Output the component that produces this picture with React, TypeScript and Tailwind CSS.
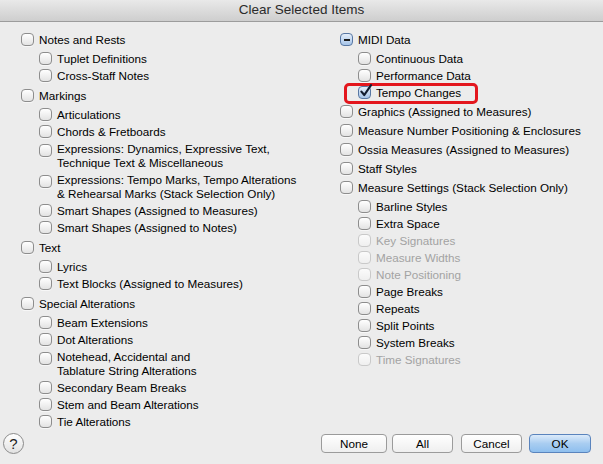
import React from "react";

type Row = {
  label: string;
  lines?: string[];
  disabled?: boolean;
  checked?: boolean;
  mixed?: boolean;
  marked?: boolean;
};

type Group = { top: Row; items?: Row[] };

const leftGroups: Group[] = [
  {
    top: { label: "Notes and Rests" },
    items: [{ label: "Tuplet Definitions" }, { label: "Cross-Staff Notes" }],
  },
  {
    top: { label: "Markings" },
    items: [
      { label: "Articulations" },
      { label: "Chords & Fretboards" },
      {
        label: "",
        lines: ["Expressions: Dynamics, Expressive Text,", "Technique Text & Miscellaneous"],
      },
      {
        label: "",
        lines: [
          "Expressions: Tempo Marks, Tempo Alterations",
          "& Rehearsal Marks (Stack Selection Only)",
        ],
      },
      { label: "Smart Shapes (Assigned to Measures)" },
      { label: "Smart Shapes (Assigned to Notes)" },
    ],
  },
  {
    top: { label: "Text" },
    items: [{ label: "Lyrics" }, { label: "Text Blocks (Assigned to Measures)" }],
  },
  {
    top: { label: "Special Alterations" },
    items: [
      { label: "Beam Extensions" },
      { label: "Dot Alterations" },
      { label: "", lines: ["Notehead, Accidental and", "Tablature String Alterations"] },
      { label: "Secondary Beam Breaks" },
      { label: "Stem and Beam Alterations" },
      { label: "Tie Alterations" },
    ],
  },
];

const rightGroups: Group[] = [
  {
    top: { label: "MIDI Data", mixed: true },
    items: [
      { label: "Continuous Data" },
      { label: "Performance Data" },
      { label: "Tempo Changes", checked: true, marked: true },
    ],
  },
  { top: { label: "Graphics (Assigned to Measures)" } },
  { top: { label: "Measure Number Positioning & Enclosures" } },
  { top: { label: "Ossia Measures (Assigned to Measures)" } },
  { top: { label: "Staff Styles" } },
  {
    top: { label: "Measure Settings (Stack Selection Only)" },
    items: [
      { label: "Barline Styles" },
      { label: "Extra Space" },
      { label: "Key Signatures", disabled: true },
      { label: "Measure Widths", disabled: true },
      { label: "Note Positioning", disabled: true },
      { label: "Page Breaks" },
      { label: "Repeats" },
      { label: "Split Points" },
      { label: "System Breaks" },
      { label: "Time Signatures", disabled: true },
    ],
  },
];

const Box = ({ row }: { row: Row }) => {
  if (row.mixed || row.checked) {
    return (
      <span className="relative mt-[2px] w-[13px] h-[13px] shrink-0 rounded-[4px] border border-[#5877a3] bg-gradient-to-b from-[#e4eefa] to-[#a6c4e8]">
        {row.mixed && (
          <span className="absolute left-[2.5px] top-[4.5px] w-[6px] h-[2px] bg-[#1b1b1b]" />
        )}
        {row.checked && (
          <svg
            className="absolute left-[0px] top-[-3px]"
            width="14"
            height="14"
            viewBox="0 0 14 14"
          >
            <path
              d="M2.4 7.6 L5.3 11 L12 1.2"
              fill="none"
              stroke="#121c30"
              strokeWidth="2.2"
              strokeLinecap="round"
              strokeLinejoin="round"
            />
          </svg>
        )}
      </span>
    );
  }
  return (
    <span
      className={
        row.disabled
          ? "mt-[2px] w-[13px] h-[13px] shrink-0 rounded-[4px] border border-[#c9c9c9] bg-gradient-to-b from-[#fbfbfb] to-[#efefef]"
          : "mt-[2px] w-[13px] h-[13px] shrink-0 rounded-[4px] border border-[#8d8d8d] bg-gradient-to-b from-white to-[#e3e3e3] shadow-[0_1px_0_rgba(255,255,255,0.6)]"
      }
    />
  );
};

const Item = ({ row }: { row: Row }) => {
  const multi = !!row.lines;
  return (
    <div className={multi ? "relative flex gap-[5px] py-[2px]" : "relative flex gap-[5px] h-[17px] items-start"}>
      {row.marked && (
        <span className="absolute left-[-14px] top-[-1.5px] w-[134px] h-[21px] rounded-[5px] border-[3px] border-[#e3161d]" />
      )}
      <Box row={row} />
      <div
        className={
          (row.disabled ? "text-[#a3a3a3] " : "text-black ") +
          (multi ? "leading-[13.5px] -mt-[2px] pt-[2px]" : "leading-[17px]")
        }
      >
        {multi ? row.lines!.map((l) => <div key={l}>{l}</div>) : row.label}
      </div>
    </div>
  );
};

const Column = ({ groups, gap }: { groups: Group[]; gap: string }) => (
  <div className={"flex flex-col " + gap}>
    {groups.map((g) => (
      <div key={g.top.label}>
        <Item row={g.top} />
        {g.items && (
          <div className="mt-[2px] ml-[18px] flex flex-col">
            {g.items.map((r, i) => (
              <Item key={r.label + i} row={r} />
            ))}
          </div>
        )}
      </div>
    ))}
  </div>
);

const Button = ({ label, className, primary }: { label: string; className: string; primary?: boolean }) => (
  <button
    className={
      "h-[19px] rounded-[4px] border text-[11.7px] leading-[17px] text-black " +
      (primary
        ? "border-[#5a84bd] bg-gradient-to-b from-[#dcebfa] via-[#a9cdf1] to-[#8ebfee] "
        : "border-[#9b9b9b] bg-gradient-to-b from-white to-[#efefef] ") +
      className
    }
  >
    {label}
  </button>
);

export default function App() {
  return (
    <div
      className="w-[603px] h-[464px] bg-[#ececec] flex flex-col overflow-hidden text-[11.7px]"
      style={{ fontFamily: '"Liberation Sans", Arial, sans-serif' }}
    >
      <div className="h-[22px] shrink-0 flex items-center justify-center bg-gradient-to-b from-[#e9e9e9] to-[#cecece] border-b border-[#9c9c9c] text-[13.5px] text-[#2b2b2b]">
        Clear Selected Items
      </div>

      <div className="flex pt-[9px]">
        <div className="w-[319px] pl-[21px]">
          <Column groups={leftGroups} gap="gap-[3px]" />
        </div>
        <div className="pl-[21px]">
          <Column groups={rightGroups} gap="gap-[2px]" />
        </div>
      </div>

      <div className="mt-auto mb-[10px] h-[22px] flex items-center pl-[3px] pr-[12px]">
        <div className="w-[21px] h-[21px] rounded-full border border-[#8a8a8a] bg-gradient-to-b from-white to-[#e2e2e2] flex items-center justify-center text-[15px] text-[#222] leading-none">
          ?
        </div>
        <div className="ml-auto flex items-center">
          <Button label="None" className="w-[66px]" />
          <Button label="All" className="w-[61px] ml-[5px]" />
          <Button label="Cancel" className="w-[61px] ml-[8px]" />
          <Button label="OK" className="w-[62px] ml-[7px]" primary />
        </div>
      </div>
    </div>
  );
}
